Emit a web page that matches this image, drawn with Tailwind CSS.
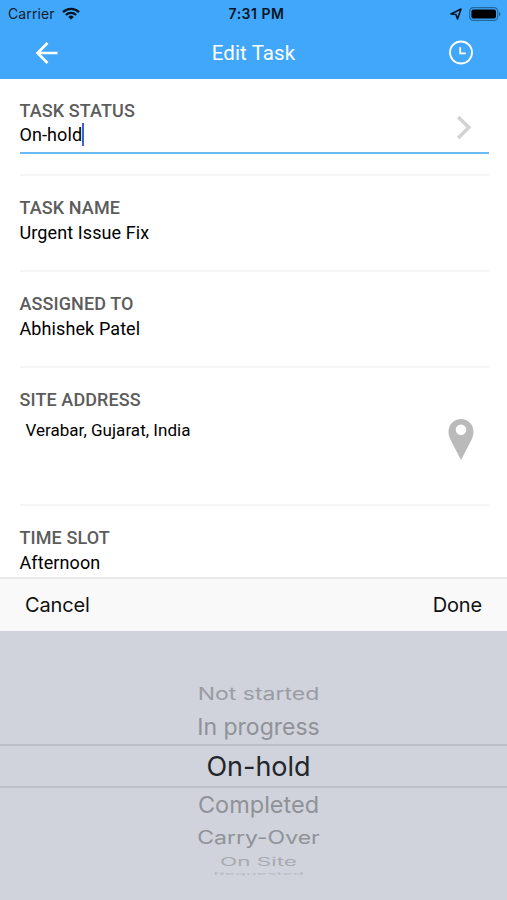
<!DOCTYPE html>
<html lang="en">
<head>
<meta charset="utf-8">
<meta name="viewport" content="width=device-width, initial-scale=1">
<title>Edit Task</title>
<script src="https://cdn.jsdelivr.net/npm/@tailwindcss/browser@4"></script>
</head>
<body class="h-[900px] w-[507px] overflow-hidden bg-white font-['Roboto',sans-serif] text-black">
<div class="flex h-[900px] flex-col">
  <header class="h-[79px] shrink-0 bg-[#41a7fb]">
    <div class="grid h-[27px] grid-cols-3 items-center pl-2 pr-[6px] font-['Inter',sans-serif] text-[#10202f]">
      <div class="flex items-center gap-[7px]">
        <span class="text-[14px] tracking-[0.1px]">Carrier</span>
        <svg class="h-[13px] w-[18px]" viewBox="0 0 18 13" fill="none" stroke="#071522" stroke-width="2.3"><path d="M1 5.1a11.4 11.4 0 0 1 16 0M3.9 8a7.2 7.2 0 0 1 10.2 0"/><path d="M9 12.6 6.2 9.9a4 4 0 0 1 5.6 0z" fill="#071522" stroke="none"/></svg>
      </div>
      <span class="ml-[4px] whitespace-nowrap text-center text-[14px] font-semibold tracking-[0.5px] text-[#071522]">7:31 PM</span>
      <div class="flex items-center justify-end gap-[7px]">
        <svg class="h-[12px] w-[12px]" viewBox="0 0 12 12" fill="none" stroke="#071522" stroke-width="1.6" stroke-linejoin="round"><path d="M11 1 7.500 11 6 6.500 1 6z"/></svg>
        <svg class="h-[14px] w-[32px]" viewBox="0 0 32 14"><rect x=".7" y=".7" width="28" height="12.6" rx="3.6" fill="none" stroke="#23689f" stroke-width="1.2"/><rect x="2.4" y="2.4" width="24.6" height="9.2" rx="2" fill="#000"/><path d="M30 4.5q3 2.5 0 5z" fill="#23689f"/></svg>
      </div>
    </div>
    <div class="flex h-[51px] items-center justify-between pl-[35px] pr-[33px] text-white">
      <svg class="h-[24px] w-[24px]" viewBox="0 0 24 24" fill="none" stroke="currentColor" stroke-width="2.6"><path d="M22.5 12H2.500M12.500 2 2.500 12l10 10"/></svg>
      <h1 class="pt-[2px] text-[20.5px] tracking-[0.1px]">Edit Task</h1>
      <svg class="h-[26px] w-[26px]" viewBox="0 0 26 26" fill="none" stroke="currentColor" stroke-width="1.8"><circle cx="13" cy="12.500" r="11"/><path d="M12.200 7.200v6.100h5.600"/></svg>
    </div>
  </header>

  <main class="h-[498px] shrink-0 overflow-hidden pl-[19.5px] pr-[18px] text-[18px] leading-[25px] tracking-[0.1px]">
    <section class="h-[97px] border-b-2 border-[#f5f5f5] pt-[19px]">
      <div class="flex h-[56px] justify-between border-b-2 border-[#6bb9f5]">
        <div>
          <h2 class="font-medium text-[#5c5c5c]">TASK STATUS</h2>
          <div class="flex h-[23px] items-center"><span>On-hold</span><i class="h-[23px] w-[2px] bg-[#3f64d0]"></i></div>
        </div>
        <svg class="mr-[16px] mt-[17px] h-[25px] w-[18px]" viewBox="0 0 18 26" fill="none" stroke="#d2d2d2" stroke-width="3.6"><path d="m3 2 11 11L3 24"/></svg>
      </div>
    </section>
    <section class="h-[96px] border-b-2 border-[#f5f5f5] pt-[19px]">
      <h2 class="font-medium text-[#5c5c5c]">TASK NAME</h2>
      <p>Urgent Issue Fix</p>
    </section>
    <section class="h-[96px] border-b-2 border-[#f5f5f5] pt-[19px]">
      <h2 class="font-medium text-[#5c5c5c]">ASSIGNED TO</h2>
      <p>Abhishek Patel</p>
    </section>
    <section class="flex h-[138px] justify-between border-b-2 border-[#f5f5f5] pt-[19px]">
      <div>
        <h2 class="font-medium text-[#5c5c5c]">SITE ADDRESS</h2>
        <p class="ml-[6px] mt-[6px] text-[17px] tracking-[0.03px]">Verabar, Gujarat, India</p>
      </div>
      <svg class="mr-[15px] mt-[32px] h-[41px] w-[26px]" viewBox="0 0 26 41"><path fill="#bababa" fill-rule="evenodd" d="M13 0C5.8 0 .5 5.6.5 12.8c0 3.3 1 6 2.5 9L13 41l10-19.2c1.500-3 2.500-5.700 2.500-9C25.500 5.600 20.200 0 13 0zm0 5.500a5.300 5.300 0 1 1 0 10.600 5.300 5.300 0 0 1 0-10.600z"/></svg>
    </section>
    <section class="pt-[19px]">
      <h2 class="font-medium text-[#5c5c5c]">TIME SLOT</h2>
      <p>Afternoon</p>
    </section>
  </main>

  <div class="flex h-[54px] shrink-0 items-center justify-between border-t-2 border-[#e9e9e9] bg-[#f9f9fa] px-[25px] font-['Inter',sans-serif] text-[20px] tracking-[-0.15px] text-[#111]">
    <button>Cancel</button>
    <button>Done</button>
  </div>

  <div class="flex grow flex-col items-center bg-[#d0d3db] pt-[47px] pl-[10px] font-['Inter',sans-serif] text-[#8f9298]">
    <div class="flex h-[32px] items-center text-[23px] text-[#999ca2]"><span class="scale-y-[0.76]">Not started</span></div>
    <div class="flex h-[34px] items-center text-[23px]"><span>In progress</span></div>
    <div class="-ml-[10px] flex h-[44px] w-[507px] items-center justify-center border-y-2 border-[#bcbfc5] pl-[10px] pt-[2px] text-[27px] text-[#23262b]"><span>On-hold</span></div>
    <div class="flex h-[34px] items-center text-[23.5px]"><span>Completed</span></div>
    <div class="flex h-[33px] items-center text-[23px]"><span class="scale-y-[0.8]">Carry-Over</span></div>
    <div class="flex h-[14px] items-center text-[22.5px] text-[#a7aab0]"><span class="scale-y-[0.5]">On Site</span></div>
    <div class="flex h-[8px] items-center text-[18px] text-[#b7bac1]"><span class="scale-y-[0.2]">Requested</span></div>
  </div>
</div>
</body>
</html>
